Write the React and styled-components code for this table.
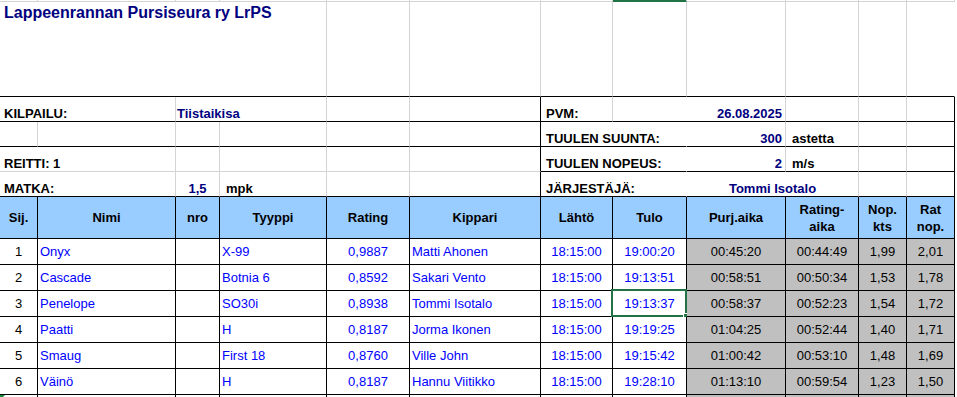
import React from "react";
import styled, { createGlobalStyle } from "styled-components";

const GRID = "#d4d4d4";
const INK = "#000000";
const NAVY = "#000080";
const BLUE = "#0000ff";
const HEAD = "#99ccff";
const SHADE = "#c0c0c0";
const EXCEL_GREEN = "#217346";

const GlobalStyle = createGlobalStyle`
  html, body {
    margin: 0;
    padding: 0;
    overflow: hidden;
    background: #ffffff;
  }
  body {
    font-family: "Liberation Sans", Arial, sans-serif;
    font-size: 13px;
  }
`;

const Sheet = styled.div`
  display: grid;
  grid-template-columns: 38px 138px 44px 107px 83px 131px 72px 74px 99px 73px 48px 48px;
  grid-template-rows: 2px 95px repeat(4, 25px) 42px repeat(7, 26px);
  width: 955px;
`;

const Cell = styled.div`
  grid-column: span ${(p) => p.$span || 1};
  box-sizing: border-box;
  position: relative;
  display: flex;
  align-items: flex-end;
  justify-content: ${(p) => p.$align || "flex-start"};
  padding: 0 ${(p) => p.$pr ?? 0}px 0 ${(p) => p.$pl ?? 0}px;
  border-right: 1px solid ${(p) => p.$rb || GRID};
  border-bottom: 1px solid ${(p) => p.$bb || GRID};
  background: ${(p) => p.$bg || "#ffffff"};
  color: ${(p) => p.$ink || INK};
  font-weight: ${(p) => (p.$bold ? 700 : 400)};
  line-height: 15px;
  white-space: nowrap;
`;

const StripCell = styled.div`
  box-sizing: border-box;
  border-right: 1px solid ${GRID};
  border-bottom: 1px solid ${(p) => (p.$active ? EXCEL_GREEN : GRID)};
  background: ${(p) => (p.$active ? EXCEL_GREEN : "#ffffff")};
`;

const TitleCell = styled(Cell)`
  align-items: flex-start;
  padding-top: 2px;
  font-size: 16px;
  line-height: 18px;
`;

const HeadCell = styled(Cell)`
  align-items: center;
  justify-content: center;
  text-align: center;
  white-space: pre-line;
  line-height: 17px;
  background: ${HEAD};
  border-color: ${INK};
  font-weight: 700;
`;

const DataCell = styled(Cell)`
  align-items: center;
  border-color: ${INK};
  padding-bottom: 1px;
`;

const Selection = styled.div`
  position: absolute;
  top: -2px;
  left: -2px;
  right: -1px;
  bottom: -1px;
  border: 2px solid ${EXCEL_GREEN};
  pointer-events: none;

  &::after {
    content: "";
    position: absolute;
    right: -4px;
    bottom: -4px;
    width: 5px;
    height: 5px;
    background: ${EXCEL_GREEN};
    border: 1px solid #ffffff;
    border-right: none;
    border-bottom: none;
  }
`;

const ErrorMark = styled.span`
  position: absolute;
  top: 0;
  left: 0;
  width: 0;
  height: 0;
  border-top: 5px solid #1e8a3c;
  border-right: 5px solid transparent;
`;

const headers = [
  "Sij.",
  "Nimi",
  "nro",
  "Tyyppi",
  "Rating",
  "Kippari",
  "Lähtö",
  "Tulo",
  "Purj.aika",
  "Rating-\naika",
  "Nop.\nkts",
  "Rat\nnop.",
];

const columns = [
  { align: "center", ink: INK },
  { align: "flex-start", ink: BLUE, pl: 2 },
  { align: "center", ink: BLUE },
  { align: "flex-start", ink: BLUE, pl: 2 },
  { align: "center", ink: BLUE },
  { align: "flex-start", ink: BLUE, pl: 2 },
  { align: "center", ink: BLUE },
  { align: "center", ink: BLUE },
  { align: "center", ink: INK, bg: SHADE },
  { align: "center", ink: INK, bg: SHADE },
  { align: "center", ink: INK, bg: SHADE },
  { align: "center", ink: INK, bg: SHADE },
];

const results = [
  ["1", "Onyx", "", "X-99", "0,9887", "Matti Ahonen", "18:15:00", "19:00:20", "00:45:20", "00:44:49", "1,99", "2,01"],
  ["2", "Cascade", "", "Botnia 6", "0,8592", "Sakari Vento", "18:15:00", "19:13:51", "00:58:51", "00:50:34", "1,53", "1,78"],
  ["3", "Penelope", "", "SO30i", "0,8938", "Tommi Isotalo", "18:15:00", "19:13:37", "00:58:37", "00:52:23", "1,54", "1,72"],
  ["4", "Paatti", "", "H", "0,8187", "Jorma Ikonen", "18:15:00", "19:19:25", "01:04:25", "00:52:44", "1,40", "1,71"],
  ["5", "Smaug", "", "First 18", "0,8760", "Ville John", "18:15:00", "19:15:42", "01:00:42", "00:53:10", "1,48", "1,69"],
  ["6", "Väinö", "", "H", "0,8187", "Hannu Viitikko", "18:15:00", "19:28:10", "01:13:10", "00:59:54", "1,23", "1,50"],
  ["", "", "", "", "", "", "", "", "", "", "", ""],
];

const selected = { row: 2, col: 7 };

const App = () => {
  return (
    <>
      <GlobalStyle />
      <Sheet>
        {/* column header edge */}
        {columns.map((_, i) => (
          <StripCell key={"s" + i} $active={i === 7} />
        ))}

        {/* title row */}
        <TitleCell $span={4} $bb={INK} $pl={4} $ink={NAVY} $bold>
          Lappeenrannan Pursiseura ry LrPS
        </TitleCell>
        {[...Array(7)].map((_, i) => (
          <Cell key={"t" + i} $bb={INK} />
        ))}
        <Cell $bb={INK} $rb="transparent" />

        {/* KILPAILU / PVM */}
        <Cell $span={2} $bb={INK} $pl={4} $bold>KILPAILU:</Cell>
        <Cell $span={2} $bb={INK} $pl={1} $ink={NAVY} $bold>Tiistaikisa</Cell>
        <Cell $bb={INK} />
        <Cell $bb={INK} $rb={INK} />
        <Cell $bb={INK} $pl={5} $bold>PVM:</Cell>
        <Cell $span={2} $bb={INK} $pr={3} $align="flex-end" $ink={NAVY} $bold>26.08.2025</Cell>
        <Cell $bb={INK} />
        <Cell $bb={INK} />
        <Cell $bb={INK} $rb={INK} />

        {/* empty / TUULEN SUUNTA */}
        <Cell $bb={INK} />
        <Cell $bb={INK} />
        <Cell $bb={INK} />
        <Cell $bb={INK} />
        <Cell $bb={INK} />
        <Cell $bb={INK} $rb={INK} />
        <Cell $span={2} $bb={INK} $rb="transparent" $pl={5} $bold>TUULEN SUUNTA:</Cell>
        <Cell $bb={INK} $pr={3} $align="flex-end" $ink={NAVY} $bold>300</Cell>
        <Cell $bb={INK} $pl={6} $bold>astetta</Cell>
        <Cell $bb={INK} />
        <Cell $bb={INK} $rb={INK} />

        {/* REITTI / TUULEN NOPEUS */}
        <Cell $span={2} $pl={4} $bold>REITTI: 1</Cell>
        <Cell />
        <Cell />
        <Cell />
        <Cell $rb={INK} />
        <Cell $span={2} $bb={INK} $rb="transparent" $pl={5} $bold>TUULEN NOPEUS:</Cell>
        <Cell $bb={INK} $pr={3} $align="flex-end" $ink={NAVY} $bold>2</Cell>
        <Cell $bb={INK} $pl={6} $bold>m/s</Cell>
        <Cell $bb={INK} />
        <Cell $bb={INK} $rb={INK} />

        {/* MATKA / JÄRJESTÄJÄ */}
        <Cell $span={2} $bb={INK} $pl={4} $bold>MATKA:</Cell>
        <Cell $bb={INK} $align="center" $ink={NAVY} $bold>1,5</Cell>
        <Cell $bb={INK} $pl={6} $bold>mpk</Cell>
        <Cell $bb={INK} />
        <Cell $bb={INK} $rb={INK} />
        <Cell $span={2} $bb={INK} $rb="transparent" $pl={5} $bold>JÄRJESTÄJÄ:</Cell>
        <Cell $span={2} $bb={INK} $align="center" $ink={NAVY} $bold>Tommi Isotalo</Cell>
        <Cell $bb={INK} />
        <Cell $bb={INK} $rb={INK} />

        {/* table header */}
        {headers.map((h) => (
          <HeadCell key={h}>{h}</HeadCell>
        ))}

        {/* results */}
        {results.map((row, r) =>
          row.map((value, c) => {
            const col = columns[c];
            return (
              <DataCell
                key={r + "-" + c}
                $align={col.align}
                $ink={col.ink}
                $bg={col.bg}
                $pl={col.pl}
              >
                {r === 6 && c === 0 && <ErrorMark />}
                {value}
                {r === selected.row && c === selected.col && <Selection />}
              </DataCell>
            );
          })
        )}
      </Sheet>
    </>
  );
};

export default App;
